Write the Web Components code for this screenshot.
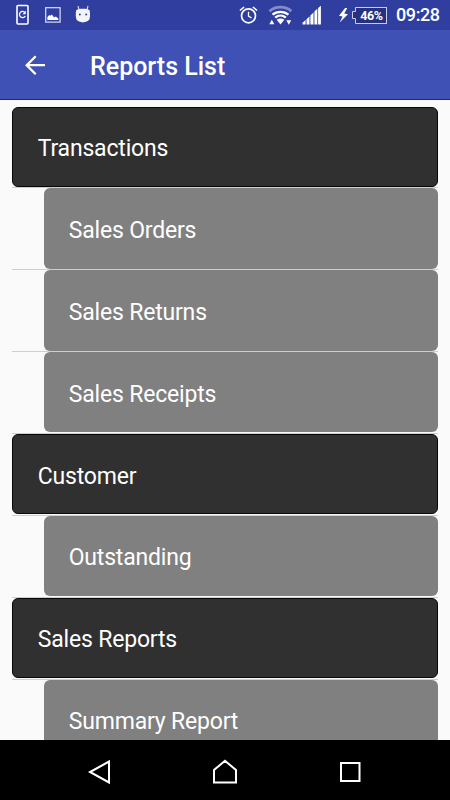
<!DOCTYPE html>
<html lang="en">
<head>
<meta charset="utf-8">
<title>Reports List</title>
<style>
  html, body {
    height: 100%;
    margin: 0;
  }

  body {
    overflow: hidden;
    background: #fafafa;
    font-family: Roboto, "Noto Sans", sans-serif;
  }
</style>
</head>
<body>
<reports-screen>
  <status-bar slot="status" battery="46%" time="09:28"></status-bar>
  <app-bar slot="header">Reports List</app-bar>
  <report-item level="group">Transactions</report-item>
  <report-item>Sales Orders</report-item>
  <report-item>Sales Returns</report-item>
  <report-item>Sales Receipts</report-item>
  <report-item level="group">Customer</report-item>
  <report-item>Outstanding</report-item>
  <report-item level="group">Sales Reports</report-item>
  <report-item>Summary Report</report-item>
  <nav-bar slot="nav"></nav-bar>
</reports-screen>

<script>
class ReportsScreen extends HTMLElement {
  constructor() {
    super();
    this.attachShadow({ mode: "open" });
    this.shadowRoot.innerHTML = `
      <style>
        :host {
          display: flex;
          flex-direction: column;
          height: 100vh;
        }

        main {
          flex: 1;
          min-height: 0;
          overflow: hidden;
          padding: 6.5px 12.4px 0;
        }
      </style>
      <slot name="status"></slot>
      <slot name="header"></slot>
      <main><slot></slot></main>
      <slot name="nav"></slot>
    `;
  }
}

class StatusBar extends HTMLElement {
  constructor() {
    super();
    this.attachShadow({ mode: "open" });
  }

  connectedCallback() {
    this.shadowRoot.innerHTML = `
      <style>
        :host {
          display: flex;
          flex: none;
          align-items: center;
          justify-content: space-between;
          box-sizing: border-box;
          height: 30px;
          padding: 0 10px 0 15px;
          background: #303f9f;
          color: #fff;
        }

        .icons {
          display: flex;
          align-items: center;
          height: 30px;
        }

        svg {
          display: block;
          flex: none;
        }

        .picture { margin-left: 15px; }
        .droid { margin-left: 14px; }
        .wifi { margin-left: 10px; }
        .signal { margin-left: 9px; }
        .bolt { margin-left: 17px; }

        .battery {
          display: flex;
          align-items: center;
          margin-left: 4px;
        }

        .level {
          box-sizing: border-box;
          width: 30px;
          height: 17px;
          border: 1px solid #c9cdea;
          border-left: 0;
          background: #26327f;
          font-size: 12.5px;
          font-weight: 700;
          line-height: 15px;
          text-align: center;
          letter-spacing: -0.4px;
        }

        .time {
          width: 44px;
          margin-left: 9px;
          font-size: 18px;
          font-weight: 500;
          line-height: 34px;
          letter-spacing: -0.4px;
          white-space: nowrap;
        }
      </style>
      <div class="icons">
        <svg width="15" height="22" viewBox="0 0 15 22" fill="none" stroke="#fff">
          <rect x="2" y="1.5" width="11" height="18.5" rx="1" stroke-width="1.6"/>
          <path d="M10 8.6A3.1 3.1 0 1 0 10.3 12" stroke-width="1.3"/>
          <path d="M10.7 6.8v3.5H7.4z" fill="#fff" stroke="none"/>
        </svg>
        <svg class="picture" width="16" height="16" viewBox="0 0 16 16">
          <rect x=".7" y=".7" width="14.4" height="14.4" fill="none" stroke="#dde0f2" stroke-width="1.2"/>
          <path d="M2.4 13V10l2-2 1 .8 1.5-1.2 2.2 3 1.7-1.2 2.5 2V13z" fill="#fff"/>
        </svg>
        <svg class="droid" width="17" height="20" viewBox="0 0 17 20">
          <path d="M4.2 5.5 3 1M11.8 5.5 13 1" stroke="#d7daf0" stroke-width="1.1"/>
          <path d="M1.2 5.2C2.8 4 5.2 3.7 7.9 3.7s5.1.3 6.7 1.5c.7 3 .6 7-.3 9.4-1.4 1.8-3.5 2.8-6.4 2.8s-5-1-6.4-2.8C.6 12.2.5 8.2 1.2 5.2z" fill="#f3f4fa"/>
          <circle cx="4.8" cy="9.5" r="1" fill="#303f9f"/>
          <circle cx="11.2" cy="9.5" r="1" fill="#303f9f"/>
        </svg>
      </div>
      <div class="icons">
        <svg width="20" height="20" viewBox="0 0 20 20" fill="none" stroke="#fff">
          <circle cx="10.5" cy="10.8" r="7" stroke-width="1.7"/>
          <path d="M10.5 6.8v4.4l3 1.7" stroke-width="1.3"/>
          <path d="M1.9 5.5 6.1 2M14.9 2l4.2 3.500" stroke-width="1.6"/>
        </svg>
        <svg class="wifi" width="24" height="22" viewBox="-1.2 -.8 24 22">
          <path d="M.3 6.4C6.5 1 16 1 22.2 6.4" fill="none" stroke="#848dc8" stroke-width="2.8"/>
          <path d="M3.3 9.9c4.4-3.9 11.5-3.9 15.9 0M6 12.9c3.1-2.7 7.5-2.7 10.6 0" fill="none" stroke="#fff" stroke-width="2.3"/>
          <path d="M7.5 15c2.3-1.9 5.3-1.9 7.6 0L11.3 19.8z" fill="#fff"/>
          <path d="M.1 19.4 2.6 15l2.5 4.4zM17.1 15.5H22l-2.4 4.4z" fill="#fff"/>
        </svg>
        <svg class="signal" width="20" height="20" viewBox="-1.3 -.5 20 20" fill="#fff">
          <path d="M.2 19v-1.8L3.3 14.6V19zM4.2 19v-5.3l3-2.8V19zM8.1 19V9.9l3.1-2.9V19zM12.1 19V6l2.9-2.7V19zM15.8 19V2.5L18.6.2V19z"/>
        </svg>
        <svg class="bolt" width="10" height="16" viewBox="-.5 -.2 10 16" fill="#fff">
          <path d="M6.6.8.5 8.5l3.5.7L1.2 15.2 9.5 7l-3.8-.7L8.8.8z"/>
        </svg>
        <div class="battery">
          <svg width="5" height="17" viewBox="0 0 5 17" fill="#26327f" stroke="#c9cdea">
            <path d="M5 .5H3.5v4h-3v7h3v5H5"/>
          </svg>
          <span class="level">${this.getAttribute("battery")}</span>
        </div>
        <span class="time">${this.getAttribute("time")}</span>
      </div>
    `;
  }
}

class AppBar extends HTMLElement {
  constructor() {
    super();
    this.attachShadow({ mode: "open" });
    this.shadowRoot.innerHTML = `
      <style>
        :host {
          display: flex;
          flex: none;
          align-items: center;
          box-sizing: border-box;
          height: 70px;
          padding: 2px 24px 0;
          border-bottom: 1px solid #1029a5;
          background: #3f51b5;
          color: #fff;
        }

        svg {
          flex: none;
        }

        h1 {
          margin: 2px 0 0 44px;
          font-size: 25px;
          font-weight: 500;
          line-height: 30px;
          white-space: nowrap;
        }
      </style>
      <svg width="22" height="22" viewBox="0 0 22 22" fill="none" stroke="#fff" stroke-width="2.3">
        <path d="M21 10.2H3M11.7 1.2 2.7 10.2l9 9"/>
      </svg>
      <h1><slot></slot></h1>
    `;
  }
}

class ReportItem extends HTMLElement {
  constructor() {
    super();
    this.attachShadow({ mode: "open" });
    this.shadowRoot.innerHTML = `
      <style>
        :host {
          display: block;
          box-sizing: border-box;
          height: 81.86px;
          border-bottom: 1px solid #cfcfcf;
          color: #fff;
        }

        .card {
          display: flex;
          align-items: center;
          box-sizing: border-box;
          height: 80.4px;
          margin-left: 31.3px;
          padding: 5px 25px 0;
          border-radius: 6px;
          background: #808080;
          font-size: 23px;
          line-height: 28px;
          letter-spacing: -0.18px;
          white-space: nowrap;
        }

        :host([level="group"]) .card {
          margin-left: 0;
          padding: 5px 24.3px 0;
          border: 1px solid #080808;
          background: #303030;
        }
      </style>
      <div class="card"><span><slot></slot></span></div>
    `;
  }
}

class NavBar extends HTMLElement {
  constructor() {
    super();
    this.attachShadow({ mode: "open" });
    this.shadowRoot.innerHTML = `
      <style>
        :host {
          display: flex;
          flex: none;
          align-items: center;
          justify-content: space-between;
          box-sizing: border-box;
          height: 60px;
          padding: 3px 87px 0 86px;
          background: #000;
        }
      </style>
      <svg width="26" height="26" viewBox="0 0 26 26" fill="none" stroke="#fff" stroke-width="2">
        <path d="M23 2.5v21L4 13z"/>
      </svg>
      <svg width="26" height="26" viewBox="0 0 26 26" fill="none" stroke="#fff" stroke-width="2">
        <path d="M2 23.5V11L13 1.8 24 11v12.5z"/>
      </svg>
      <svg width="26" height="26" viewBox="0 0 26 26" fill="none" stroke="#fff" stroke-width="2">
        <path d="M4 4h18.5v18H4z"/>
      </svg>
    `;
  }
}

customElements.define("reports-screen", ReportsScreen);
customElements.define("status-bar", StatusBar);
customElements.define("app-bar", AppBar);
customElements.define("report-item", ReportItem);
customElements.define("nav-bar", NavBar);
</script>
</body>
</html>
